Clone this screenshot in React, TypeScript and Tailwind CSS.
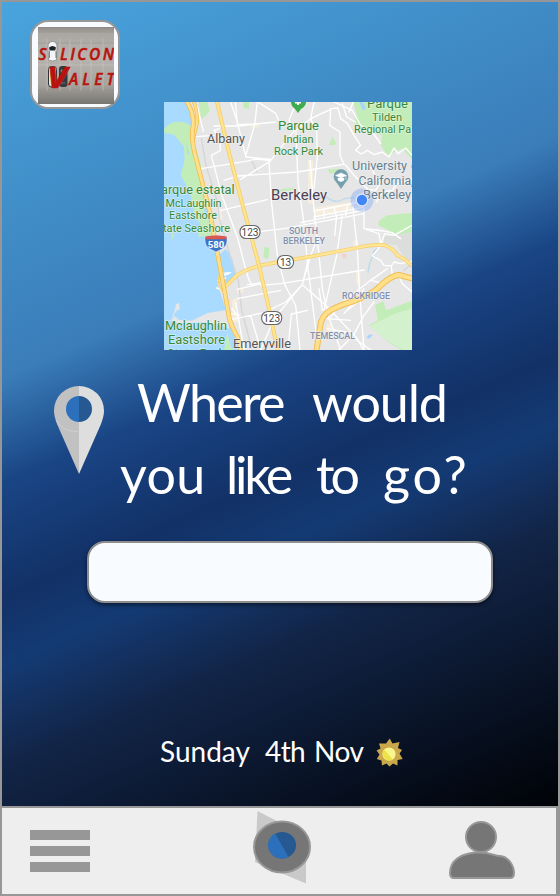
import React from "react";

const HEAVY = "font-['Lato','Liberation_Sans',sans-serif]";

function Logo() {
  return (
    <svg viewBox="38 27 76 77" className="block h-[77px] w-[76px]" preserveAspectRatio="none">
      <defs>
        <linearGradient id="asphalt" x1="0" y1="0" x2="0" y2="1">
          <stop offset="0" stopColor="#8d8a87" />
          <stop offset="0.08" stopColor="#aaa6a1" />
          <stop offset="0.4" stopColor="#b7b3ae" />
          <stop offset="0.75" stopColor="#a7a39e" />
          <stop offset="1" stopColor="#777572" />
        </linearGradient>
      </defs>
      <rect x="38" y="27" width="76" height="77" fill="url(#asphalt)" />
      <g stroke="#918c86" strokeWidth="2" opacity=".2">
        <path d="M38 32H114M38 43H114M38 90H114M38 97H114" />
      </g>
      <g stroke="#d5d1c9" strokeWidth=".7" opacity=".6" fill="none">
        <path d="M38 65H114M47 39V91M60 39V91M70 39V91M81 39V91M91 39V91M103 39V91" />
      </g>
      <path d="M48 47q0-5.500 4.500-5.500t4.500 5.500l-.5 13q-4 2-8 0z" fill="#f3f5f6" stroke="#6d7173" strokeWidth=".6" />
      <path d="M49 47.500q3.500-3 7 0l-.8 3h-5.500z" fill="#202427" />
      <path d="M49.400 51v7M56 51v7" stroke="#545b5e" strokeWidth=".8" />
      <rect x="48.500" y="66.500" width="8" height="20.500" rx="3" fill="#e2e5e5" stroke="#303338" strokeWidth="1" />
      <rect x="59" y="66" width="8.500" height="21" rx="3" fill="#363b40" />
      <path d="M61 70h5l-.5 4h-4zM61 83h4" fill="#777e82" stroke="#90989d" strokeWidth=".6" />
      <g fill="#b9130e" stroke="#b9130e" fontFamily="'Open Sans','Noto Sans',sans-serif" fontStyle="italic" fontWeight="600">
        <text x="38.500" y="59.500" fontSize="15.500" textLength="8" lengthAdjust="spacingAndGlyphs" strokeWidth=".5">S</text>
        <text x="60" y="59.500" fontSize="15.500" textLength="54" strokeWidth=".5">LICON</text>
        <text x="47" y="87.500" fontSize="28" fontWeight="700" textLength="20" lengthAdjust="spacingAndGlyphs" strokeWidth=".7">V</text>
        <text x="69" y="84.500" fontSize="15.500" textLength="45.500" strokeWidth=".5">ALET</text>
      </g>
    </svg>
  );
}

type LabelProps = { x: number; y: number; w: number; s: number; children: string };

function Label({ x, y, w, s, children }: LabelProps) {
  return (
    <text x={x} y={y} fontSize={s} textLength={w} lengthAdjust="spacingAndGlyphs">
      {children}
    </text>
  );
}

function RouteBadge({ x, y, w, n }: { x: number; y: number; w: number; n: string }) {
  return (
    <g>
      <rect x={x - w / 2} y={y - 6.5} width={w} height="13" rx="6" fill="#fff" stroke="#666" strokeWidth="1.1" />
      <text x={x} y={y + 3.7} textAnchor="middle" fontSize="10" fill="#444">{n}</text>
    </g>
  );
}

const I80 = "M66 -5Q92 35 87 75Q80 110 95 165L117 250Q140 330 152 410L170 505L183 575L196 650Q208 685 222 708L232 750";
const I80_RAMP = "M88 -5Q104 40 98 70Q92 90 88 112";
const SAN_PABLO = "M158 -5L192 140L236 310L285 490L315 620L342 750";
const ASHBY = "M186 552Q200 540 216 522Q240 505 290 490L370 475L440 464L575 438Q625 427 660 429Q690 440 700 460L722 472L748 494";
const HWY_24 = "M457 750L468 675Q472 640 500 625Q530 608 570 597Q625 575 640 560Q680 520 705 519L748 530";

function Terrain() {
  return (
    <g transform="translate(164 102) scale(.33333)" fill="none" strokeLinejoin="round" strokeLinecap="round">
      <path d="M0 0H68L90 45L83 100L115 230L150 400L175 520L160 545L175 590L186 624L130 632L80 655L48 653L30 642L36 628L47 622L46 604L36 607L32 630L30 650L0 662V744H225L212 712L196 690L183 720L0 744Z" fill="#a9daff" />
      <path d="M0 660L30 655L48 650L80 655L130 632L190 624L200 680L232 744H0Z" fill="#a9daff" />
      <path d="M185 440L205 470L216 530L185 545L165 460Z" fill="#a9daff" />
      <path d="M47 603Q33 605 32 628L28 650L48 654L84 656L130 634L188 624L196 680L165 668L120 660L80 662L30 664L24 650L33 618Z" fill="#e6e6e6" />
      <g fill="#c3edb8">
        <path d="M0 82Q20 55 50 60Q75 60 86 80L90 118L110 185L112 260L122 300L120 340L140 362L152 410L120 390L90 330L78 270L50 220L62 175L60 135L30 98L0 92Z" />
        <path d="M104 0H130L138 28L122 44L112 52ZM238 0H255V20L238 18ZM301 434L316 438L313 471L298 468ZM495 130L505 103L518 128ZM20 385L29 395L27 417ZM98 374L142 400L105 405ZM190 690L200 735L210 744H180Z" />
        <path d="M568 0H744V172L715 140L698 146L670 160L650 130L655 100L600 85L568 60L578 38ZM670 340L744 333V400L700 402L680 388L642 370L646 355ZM614 670L642 655L633 610L658 598L666 625L744 596V744H712L680 725Z" />
        <path d="M326 265L388 257V263L330 272ZM492 202L537 201L536 207L497 215Z" />
      </g>
      <path d="M616 672L700 632L744 620V744H718L675 720Z" fill="#d4f1ce" />
      <path d="M660 405L744 390V480L722 467L698 430L660 426Z" fill="#dcdedc" />
      <g fill="#f5eddd">
        <path d="M432 175H448V305H432ZM445 318L560 300V322L455 345ZM205 592L222 588L214 630L228 638L226 662L202 660ZM567 415H583V440H567ZM576 510H589V545H576ZM160 320L170 318L176 350L164 360ZM218 560L236 556L240 570L220 576ZM488 664H502V710H484ZM258 65H285V76H258Z" />
      </g>
      <path d="M534 457L548 455L546 467L537 470Z" fill="#f5cfca" />
      <g fill="#a2d5ff">
        <path d="M595 0L606 18L598 27L586 0ZM607 707L617 697L627 700L614 710ZM66 120L72 145L76 158L70 152Z" />
      </g>
      <path d="M112 110L126 190L160 300L166 350L200 465L224 540L232 620L262 735M180 395L200 470M262 172L278 208M720 505L744 485" stroke="#d3d5d9" strokeWidth="4" />
      <path d="M460 290Q480 278 500 293Q520 305 540 290L570 286M640 440L628 448L632 464M626 462L618 480L612 510" stroke="#bbdaee" strokeWidth="4" />
      <g stroke="#fff" strokeWidth="4">
        <path d="M100 15L118 88M96 104L150 100M112 200L245 178L278 171L318 176M180 235L222 222L400 210L538 187M170 325L310 293M230 232L318 178L386 92L440 50L500 22M150 72H225L275 66L335 60M166 80L150 85L165 108L170 145L142 160L175 285L220 405L250 520L262 550M200 0L220 60L245 162L272 68L280 0M214 0L220 68L276 66M285 2L335 34L346 60M245 165L320 172M315 176L322 295L340 460L362 548L395 610L408 744" />
        <path d="M398 0L375 55L396 90L402 240L420 365L432 500L450 640L456 690M438 175L448 300L462 430L475 560L492 640L530 744M450 0L440 50L458 90L460 165L450 260M500 22L497 70L528 90L528 160L540 187M290 388L360 380L600 335M410 362L600 324M450 345L595 316M450 327L590 300M452 325V360M480 320V345M510 315L518 350M568 300V330L580 440L586 560L600 744M535 340L518 460L480 625M518 344L512 400M550 312L545 340M600 318V380L640 384M600 380L645 395L650 428" />
        <path d="M462 405L430 485L415 548L330 650L290 744M415 548L485 610L580 710L598 744M440 460L415 548M250 548L290 543M290 550L350 545L600 504M220 562L290 545M220 590L270 580L350 565M205 652L300 632L365 600L415 548M260 640L290 744M215 602L240 744M384 636L430 625M382 636L372 744M488 650L560 655M500 645L530 605L620 535L670 500M550 625L600 585M630 600L600 640L568 700L525 744M490 680L545 690L620 744M465 560L475 625" />
        <path d="M500 20L522 18L530 50L550 64L570 100L590 130L575 145L592 156L610 145L630 158L655 150L675 165L690 138L702 155L725 138L744 160M510 0L565 25L590 70L625 90L650 125M535 5L548 45L575 60M568 0L555 30M543 187L575 225L610 260L590 280M592 185L625 200L635 230L650 240L635 265L615 262M638 300L655 270L685 265L700 245L744 230" />
        <path d="M650 428L662 395L690 400L744 370M640 384L685 392L710 410M650 430L626 462L650 475L660 490L682 492L690 480L710 485L744 478M682 492L685 520L670 525L660 545L620 535M704 520L715 545L744 570M600 560L570 600L540 635M168 525L195 515M170 515L200 512M162 535L185 528M158 558L180 565M200 635L225 638M204 620L222 644" />
      </g>
      <path d={I80_RAMP} stroke="#f1c15a" strokeWidth="11" />
      <path d={I80_RAMP} stroke="#ffe08a" strokeWidth="6" />
      <path d="M170 505Q155 550 180 570L192 600M186 552Q190 540 210 525" stroke="#f6d478" strokeWidth="6" />
      <path d={ASHBY} stroke="#f5ce68" strokeWidth="11" />
      <path d={ASHBY} stroke="#ffe697" strokeWidth="7" />
      <path d={SAN_PABLO} stroke="#f5ce68" strokeWidth="12" />
      <path d={SAN_PABLO} stroke="#ffe48f" strokeWidth="7" />
      <path d={I80} stroke="#f0bd55" strokeWidth="14" />
      <path d={I80} stroke="#ffe08a" strokeWidth="9" />
      <path d={HWY_24} stroke="#f0bd55" strokeWidth="18" />
      <path d={HWY_24} stroke="#ffdf87" strokeWidth="12" />
    </g>
  );
}

function CityMap() {
  return (
    <svg viewBox="164 102 248 248" className="block h-[248px] w-[248px] shrink-0" fontFamily="Roboto, sans-serif">
      <rect x="164" y="102" width="248" height="248" fill="#e6e6e6" />
      <Terrain />
      <RouteBadge x={250} y={232} w={20} n="123" />
      <RouteBadge x={285.5} y={262} w={16} n="13" />
      <RouteBadge x={271.7} y={318} w={20} n="123" />
      <path d="M205 237q11-3 22 0 1 9-5 12l-6 3-6-3q-6-3-5-12z" fill="#3b75c8" stroke="#fff" strokeWidth=".5" />
      <path d="M205.500 236.500q10.500-2 21 0v2.700h-21z" fill="#dc5751" />
      <text x="216" y="248.300" textAnchor="middle" fontSize="9.500" fontWeight="700" fill="#fff">580</text>
      <path d="M291 102h15q0 4-5 7l-3 4-3-4q-4-3-4-7z" fill="#3fac4d" />
      <path d="M295 102h6v1.500h-2v1.500h-2v-1.500h-2z" fill="#fff" />
      <circle cx="362" cy="200" r="11.500" fill="#83aaf5" opacity=".42" />
      <g stroke="#f4f4f4" strokeOpacity=".6" strokeWidth="1.500" paintOrder="stroke" strokeLinejoin="round">
        <g fill="#555">
          <Label x={207} y={142.500} w={38} s={12.5}>Albany</Label>
          <Label x={233} y={348} w={58} s={12.5}>Emeryville</Label>
        </g>
        <g fill="#4c4058"><Label x={271} y={199.800} w={56} s={14}>Berkeley</Label></g>
        <g fill="#318b36">
          <Label x={278} y={130} w={41} s={12.5}>Parque</Label>
          <Label x={283.500} y={142.500} w={30} s={11}>Indian</Label>
          <Label x={274} y={155} w={49} s={11}>Rock Park</Label>
          <Label x={367} y={108} w={41} s={12.5}>Parque</Label>
          <Label x={372} y={121} w={30} s={11}>Tilden</Label>
          <Label x={354} y={133} w={57} s={11}>Regional Pa</Label>
          <Label x={161} y={194} w={73.500} s={12.5}>arque estatal</Label>
          <Label x={165.5} y={207} w={56} s={11}>McLaughlin</Label>
          <Label x={169} y={219} w={48} s={11}>Eastshore</Label>
          <Label x={163} y={231.500} w={67} s={11}>tate Seashore</Label>
          <Label x={165} y={329.500} w={62} s={12.5}>Mclaughlin</Label>
          <Label x={168} y={343.500} w={57} s={12.5}>Eastshore</Label>
          <Label x={167} y={357.500} w={58} s={12.5}>State Park</Label>
        </g>
        <g fill="#657f91">
          <Label x={352} y={170} w={55} s={12.5}>University</Label>
          <Label x={411} y={170} w={7} s={12.5}>o</Label>
          <Label x={358.5} y={184.500} w={55} s={12.5}>California,</Label>
          <Label x={363} y={198.500} w={48} s={12.5}>Berkeley</Label>
        </g>
        <g fill="#8290ae" fontWeight="500">
          <Label x={289} y={234} w={29} s={9}>SOUTH</Label>
          <Label x={283} y={243.800} w={42} s={9}>BERKELEY</Label>
          <Label x={342} y={299} w={48} s={9}>ROCKRIDGE</Label>
          <Label x={310} y={338.500} w={45} s={9}>TEMESCAL</Label>
        </g>
      </g>
      <circle cx="362" cy="200" r="5.800" fill="#4285f4" stroke="#dce8fc" strokeWidth="1.300" />
      <path d="M341 189l-4.500-6.500a7.400 7.400 0 1 1 9 0z" fill="#76a0ae" />
      <path d="M335.500 175.500l5.500-2.500 5.500 2.500-5.500 2.500zM338 178v2.300l3 1.400 3-1.400V178M346 176v4" fill="#fff" stroke="#fff" strokeWidth=".5" />
    </svg>
  );
}

function PinIcon() {
  return (
    <svg viewBox="53 385 52 90" className="block h-[90px] w-[52px] shrink-0">
      <path d="M79 386A25 24.500 0 0 0 54 411Q54 416 57 424L79 474Z" fill="#c1c1c1" />
      <path d="M79 386A25 24.500 0 0 1 104 411Q104 416 101 424L79 474Z" fill="#dedede" />
      <path d="M56 420q7 12 22 11.500" stroke="#d0d0d0" strokeWidth="1" fill="none" />
      <path d="M79 396a13 13 0 0 0 0 26z" fill="#2c6fbb" />
      <path d="M79 396a13 13 0 0 1 0 26z" fill="#265891" />
    </svg>
  );
}

function Sun() {
  return (
    <svg viewBox="376 738 27 29" className="block h-[29px] w-[27px]">
      <path d="M389.700 738.500L392.500 743.500L399.500 742L398 748L402 750L399.500 753.500L402.700 759L397.500 760L397.500 765.500L393 763.500L389.500 766.500L386.500 763.500L382 765.500L381.500 760.500L376.800 759L379.500 754.500L376.500 750.500L380.500 748.500L379 743.500L386 743.500Z" fill="#c9a84b" />
      <circle cx="389" cy="754" r="6.600" fill="#f9f58f" />
      <path d="M384.200 749.500a6.600 6.600 0 0 0 8.500 9.900z" fill="#eee24a" />
    </svg>
  );
}

function Compass() {
  return (
    <svg viewBox="250 808 64 78" className="block h-[78px] w-[64px]">
      <path d="M257.500 811L306 836V883.500L255 862Z" fill="#c9c9c9" />
      <ellipse cx="282" cy="847" rx="28" ry="25.500" fill="#767676" stroke="#979797" strokeWidth="2" />
      <ellipse cx="282.200" cy="845.200" rx="13.800" ry="13.300" fill="#265891" />
      <path d="M275.200 833.600A13.800 13.300 0 0 0 288.500 857Z" fill="#2c6fbb" />
    </svg>
  );
}

function Person() {
  return (
    <svg viewBox="448 820 68 60" className="block h-[60px] w-[68px]">
      <g fill="#767676" stroke="#979797" strokeWidth="2">
        <circle cx="481" cy="837" r="15" />
        <path d="M450 873C450 861 460 852.500 480 852.500C490 852.500 495 856 500 856C509 857 514 866 514 873Q514 878 510 878H454Q450 878 450 873Z" />
      </g>
    </svg>
  );
}

export default function App() {
  return (
    <div className="flex h-[896px] w-[560px] flex-col overflow-hidden border-2 border-[#979797] bg-[#eee]">
      <main className="flex h-[804px] shrink-0 flex-col bg-[linear-gradient(156.5deg,#49a4dd_0%,#3a7db9_36%,#1a4585_46%,#123167_57%,#143a74_63.5%,#122548_73%,#000206_100%)]">
        <header className="flex h-[100px] shrink-0 pt-[18px] pl-[28px]">
          <div className="flex h-[89px] w-[90px] shrink-0 justify-center rounded-[18px] border-2 border-[#979797] bg-[#f8fbff] pt-[5px] pl-[2px]">
            <Logo />
          </div>
        </header>
        <div className="flex h-[248px] shrink-0 pl-[162px]">
          <CityMap />
        </div>
        <section className="flex h-[191px] shrink-0 pl-[51px]">
          <div className="pt-[35px]"><PinIcon /></div>
          <h1 className={`${HEAVY} pt-[16px] text-[52px] leading-[72px] font-normal text-white`}>
            <span className="flex h-[72px] pl-[32px] whitespace-nowrap">
              <span className="w-[175px] tracking-[-1.7px]">Where</span>
              <span className="tracking-[-1.1px]">would</span>
            </span>
            <span className="flex h-[72px] pl-[15px] whitespace-nowrap">
              <span className="w-[106px] tracking-[0.3px]">you</span>
              <span className="w-[90px] tracking-[-3.3px]">like</span>
              <span className="w-[67px] tracking-[-4px]">to</span>
              <span className="tracking-[3px]">go?</span>
            </span>
          </h1>
        </section>
        <div className="flex h-[194px] shrink-0 pl-[85px]">
          <input
            aria-label="Destination"
            className="h-[62px] w-[406px] rounded-[18px] border-2 border-[#8e8e8e] bg-[#f8fbff] px-4 text-xl text-black shadow-[0_2px_4px_rgba(0,0,0,0.5)] outline-none"
          />
        </div>
        <div className="flex h-[36px] shrink-0 pl-[158px] text-white">
          <p className={`${HEAVY} flex w-[216px] text-[28px] leading-[32px] whitespace-nowrap`}>
            <span className="w-[105px]">Sunday</span>
            <span className="w-[49px] tracking-[-0.6px]">4th</span>
            <span className="tracking-[-0.5px]">Nov</span>
          </p>
          <div className="pt-[3px]"><Sun /></div>
        </div>
      </main>
      <nav className="flex h-[88px] shrink-0 border-t-2 border-r-2 border-[#979797]">
        <button aria-label="Menu" className="ml-[28px] flex h-[64px] w-[60px] flex-col gap-[6px] pt-[22px]">
          <span className="h-[10px] w-full shrink-0 bg-[#979797]" />
          <span className="h-[10px] w-full shrink-0 bg-[#979797]" />
          <span className="h-[10px] w-full shrink-0 bg-[#979797]" />
        </button>
        <button aria-label="Explore" className="ml-[160px] h-[78px]"><Compass /></button>
        <button aria-label="Profile" className="mt-[12px] ml-[134px] h-[60px]"><Person /></button>
      </nav>
    </div>
  );
}
